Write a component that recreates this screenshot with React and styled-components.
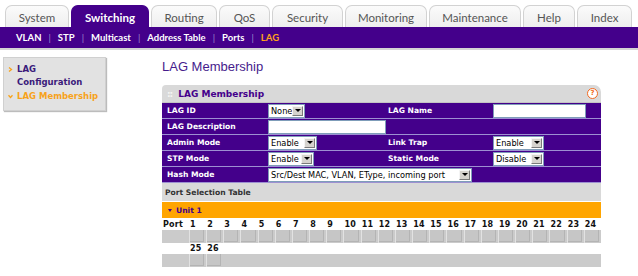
import React from 'react';
import styled, { createGlobalStyle } from 'styled-components';

const PURPLE = '#44008b';
const ORANGE = '#ffa500';
const LINE = '#9d90d2';

const Global = createGlobalStyle`
  html, body { margin: 0; padding: 0; background: #fff; }
  body {
    font-family: "DejaVu Sans", Verdana, sans-serif;
    width: 638px;
    height: 276px;
    overflow: hidden;
  }
`;

const Header = styled.header`
  display: flex;
  flex-direction: column;
`;

const TabBar = styled.nav`
  display: flex;
  align-items: flex-end;
  gap: 2px;
  padding: 5px 0 0 5px;
  height: 22px;
`;

const Tab = styled.div`
  width: ${p => p.$w}px;
  height: 22px;
  box-sizing: border-box;
  display: flex;
  align-items: center;
  justify-content: center;
  border-radius: 7px 7px 0 0;
  font-family: Lato, "Liberation Sans", sans-serif;
  font-size: 11.5px;
  font-weight: ${p => (p.$active ? 700 : 400)};
  color: ${p => (p.$active ? '#fff' : '#555')};
  background: ${p => (p.$active ? PURPLE : 'linear-gradient(#fbfbfb, #eeeeee)')};
  border: 1px solid ${p => (p.$active ? PURPLE : '#d2d2d2')};
  border-bottom: none;
  padding-top: 1px;
`;

const SubNav = styled.div`
  height: 21px;
  background: ${PURPLE};
  border-bottom: 2px solid #d4d4d4;
  display: flex;
  align-items: center;
  padding-left: 16px;
  font-family: Lato, "Liberation Sans", sans-serif;
  font-size: 9.5px;
  font-weight: 700;
  color: #fff;
`;

const SubLink = styled.span`
  color: ${p => (p.$active ? '#ffa31a' : '#fff')};
`;

const Sep = styled.span`
  color: #9c8ccc;
  font-weight: 400;
  margin: 0 7px;
`;

const Main = styled.div`
  display: flex;
  align-items: flex-start;
`;

const Sidebar = styled.aside`
  margin: 7px 0 0 3px;
  width: 103px;
  box-sizing: border-box;
  background: #e2e2e2;
  border: 1px solid #d0d0d0;
  box-shadow: 1px 1px 1px #bcbcbc;
  padding: 5px 0 7px 4px;
  display: flex;
  flex-direction: column;
  gap: 1px;
  font-size: 8.5px;
  font-weight: 700;
`;

const SideItem = styled.div`
  display: flex;
  align-items: flex-start;
  line-height: 13px;
  color: ${p => (p.$active ? '#f7a21b' : '#3a1a7a')};
`;

const SideMark = styled.svg`
  width: 5px;
  height: 5px;
  flex: none;
  margin: 4px 4px 0 0;
`;

const Content = styled.section`
  margin-left: 56px;
  width: 439px;
  display: flex;
  flex-direction: column;
`;

const Title = styled.h1`
  margin: 9px 0 0 0;
  height: 26px;
  font-family: "Liberation Sans", Arial, sans-serif;
  font-size: 13px;
  font-weight: 400;
  color: #461c8c;
`;

const PanelHead = styled.div`
  height: 17px;
  background: #d9d9d9;
  border-bottom: 1px solid #c4c4c4;
  border-radius: 4px 7px 0 0;
  display: flex;
  align-items: center;
  padding-left: 5px;
  font-size: 9px;
  font-weight: 700;
  color: ${PURPLE};
`;

const Grip = styled.span`
  color: #f4f4f4;
  font-size: 9px;
  margin-right: 6px;
  letter-spacing: -1px;
`;

const Help = styled.span`
  margin-left: auto;
  margin-right: 3px;
  width: 9px;
  height: 9px;
  border: 1px solid #f26a22;
  border-radius: 50%;
  background: #fff;
  color: #f26a22;
  font-size: 7px;
  font-weight: 700;
  display: flex;
  align-items: center;
  justify-content: center;
  line-height: 1;
`;

const FormRow = styled.div`
  display: grid;
  grid-template-columns: 106px 115px 110px 108px;
  height: 15px;
  background: ${PURPLE};
  border-bottom: 1px solid ${LINE};
  align-items: center;
`;

const Label = styled.div`
  padding-left: 5px;
  font-size: 7.6px;
  font-weight: 700;
  color: #fff;
  white-space: nowrap;
`;

const Cell = styled.div`
  display: flex;
  align-items: center;
  grid-column: ${p => p.$span || 'auto'};
  min-width: 0;
`;

const TextBox = styled.div`
  width: ${p => p.$w}px;
  height: 14px;
  box-sizing: border-box;
  background: #fff;
  border: 1px solid #7f9db9;
  flex: none;
`;

const SelectBox = styled.div`
  width: ${p => p.$w}px;
  height: 14px;
  box-sizing: border-box;
  background: #fff;
  border: 1px solid #7f9db9;
  display: flex;
  align-items: center;
  padding: 0 1px 0 2px;
  flex: none;
  font-size: 8.2px;
  color: #000;
  white-space: nowrap;
`;

const SelectText = styled.span`
  flex: 1;
  overflow: hidden;
`;

const Arrow = styled.span`
  width: 11px;
  height: 10px;
  box-sizing: border-box;
  background: #d6d3ce;
  border: 1px solid;
  border-color: #f4f4f4 #7a7a7a #7a7a7a #f4f4f4;
  display: flex;
  align-items: center;
  justify-content: center;
  &::after {
    content: '';
    border-left: 3px solid transparent;
    border-right: 3px solid transparent;
    border-top: 3px solid #000;
  }
`;

const Select = ({ w, children }) => (
  <SelectBox $w={w}>
    <SelectText>{children}</SelectText>
    <Arrow />
  </SelectBox>
);

const SectionBar = styled.div`
  height: 18px;
  background: #d9d9d9;
  border-bottom: 1px solid #fff;
  display: flex;
  align-items: center;
  padding-left: 3px;
  font-size: 7.6px;
  font-weight: 700;
  color: #333;
`;

const UnitBar = styled.div`
  height: 16px;
  background: ${ORANGE};
  display: flex;
  align-items: center;
  padding-left: 6px;
  font-size: 7.6px;
  font-weight: 700;
  color: ${PURPLE};
`;

const UnitMark = styled.span`
  border-left: 2.5px solid transparent;
  border-right: 2.5px solid transparent;
  border-top: 3px solid ${PURPLE};
  margin-right: 4px;
`;

const PortGrid = styled.div`
  display: grid;
  grid-template-columns: 27px repeat(24, 1fr);
`;

const NumCell = styled.div`
  height: ${p => p.$h}px;
  grid-column: ${p => p.$span || 'auto'};
  display: flex;
  align-items: center;
  padding-left: 1px;
  font-size: 8px;
  font-weight: 700;
  color: #111;
  letter-spacing: 0.2px;
`;

const BoxCell = styled.div`
  height: 13px;
  background: #cbcbcb;
  grid-column: ${p => p.$span || 'auto'};
  display: flex;
  align-items: stretch;
  padding: ${p => (p.$port ? '0 2px 1px 0' : '0')};
  border-left: ${p => (p.$port ? '1px solid #e2e2e2' : 'none')};
  box-sizing: border-box;
`;

const PortBox = styled.span`
  flex: 1;
  background: #c6c6c6;
  border-right: 1px solid #b4b4b4;
  border-bottom: 1px solid #b4b4b4;
`;

const tabs = [
  ['System', 64], ['Switching', 78, true], ['Routing', 66], ['QoS', 51],
  ['Security', 71], ['Monitoring', 82], ['Maintenance', 92], ['Help', 52], ['Index', 55],
];

const sublinks = ['VLAN', 'STP', 'Multicast', 'Address Table', 'Ports', 'LAG'];

const ports = Array.from({ length: 24 }, (_, i) => i + 1);

export default function App() {
  return (
    <>
      <Global />
      <Header>
        <TabBar>
          {tabs.map(([t, w, a]) => (
            <Tab key={t} $w={w} $active={a}>{t}</Tab>
          ))}
        </TabBar>
        <SubNav>
          {sublinks.map((s, i) => (
            <React.Fragment key={s}>
              {i > 0 && <Sep>|</Sep>}
              <SubLink $active={s === 'LAG'}>{s}</SubLink>
            </React.Fragment>
          ))}
        </SubNav>
      </Header>
      <Main>
        <Sidebar>
          <SideItem>
            <SideMark viewBox="0 0 5 5">
              <path d="M1 0.5 L3.5 2.5 L1 4.5" fill="none" stroke="#f7a21b" strokeWidth="1.3" />
            </SideMark>
            <span>LAG<br />Configuration</span>
          </SideItem>
          <SideItem $active>
            <SideMark viewBox="0 0 5 5">
              <path d="M0.5 1.2 L2.5 3.5 L4.5 1.2" fill="none" stroke="#f7a21b" strokeWidth="1.3" />
            </SideMark>
            <span>LAG Membership</span>
          </SideItem>
        </Sidebar>
        <Content>
          <Title>LAG Membership</Title>
          <PanelHead>
            <Grip>::</Grip>
            LAG Membership
            <Help>?</Help>
          </PanelHead>
          <FormRow>
            <Label>LAG ID</Label>
            <Cell><Select w={37}>None</Select></Cell>
            <Label>LAG Name</Label>
            <Cell><TextBox $w={93} /></Cell>
          </FormRow>
          <FormRow>
            <Label>LAG Description</Label>
            <Cell $span="2 / 5"><TextBox $w={118} /></Cell>
          </FormRow>
          <FormRow>
            <Label>Admin Mode</Label>
            <Cell><Select w={49}>Enable</Select></Cell>
            <Label>Link Trap</Label>
            <Cell><Select w={51}>Enable</Select></Cell>
          </FormRow>
          <FormRow>
            <Label>STP Mode</Label>
            <Cell><Select w={46}>Enable</Select></Cell>
            <Label>Static Mode</Label>
            <Cell><Select w={51}>Disable</Select></Cell>
          </FormRow>
          <FormRow>
            <Label>Hash Mode</Label>
            <Cell $span="2 / 5"><Select w={204}>Src/Dest MAC, VLAN, EType, incoming port</Select></Cell>
          </FormRow>
          <SectionBar>Port Selection Table</SectionBar>
          <UnitBar><UnitMark />Unit 1</UnitBar>
          <PortGrid>
            <NumCell $h={12}>Port</NumCell>
            {ports.map(p => <NumCell key={p} $h={12}>{p}</NumCell>)}
            <BoxCell />
            {ports.map(p => <BoxCell key={p} $port><PortBox /></BoxCell>)}
            <NumCell $h={11} />
            <NumCell $h={11}>25</NumCell>
            <NumCell $h={11}>26</NumCell>
            <NumCell $h={11} $span="4 / 26" />
            <BoxCell />
            <BoxCell $port><PortBox /></BoxCell>
            <BoxCell $port><PortBox /></BoxCell>
            <BoxCell $span="4 / 26" />
          </PortGrid>
        </Content>
      </Main>
    </>
  );
}
